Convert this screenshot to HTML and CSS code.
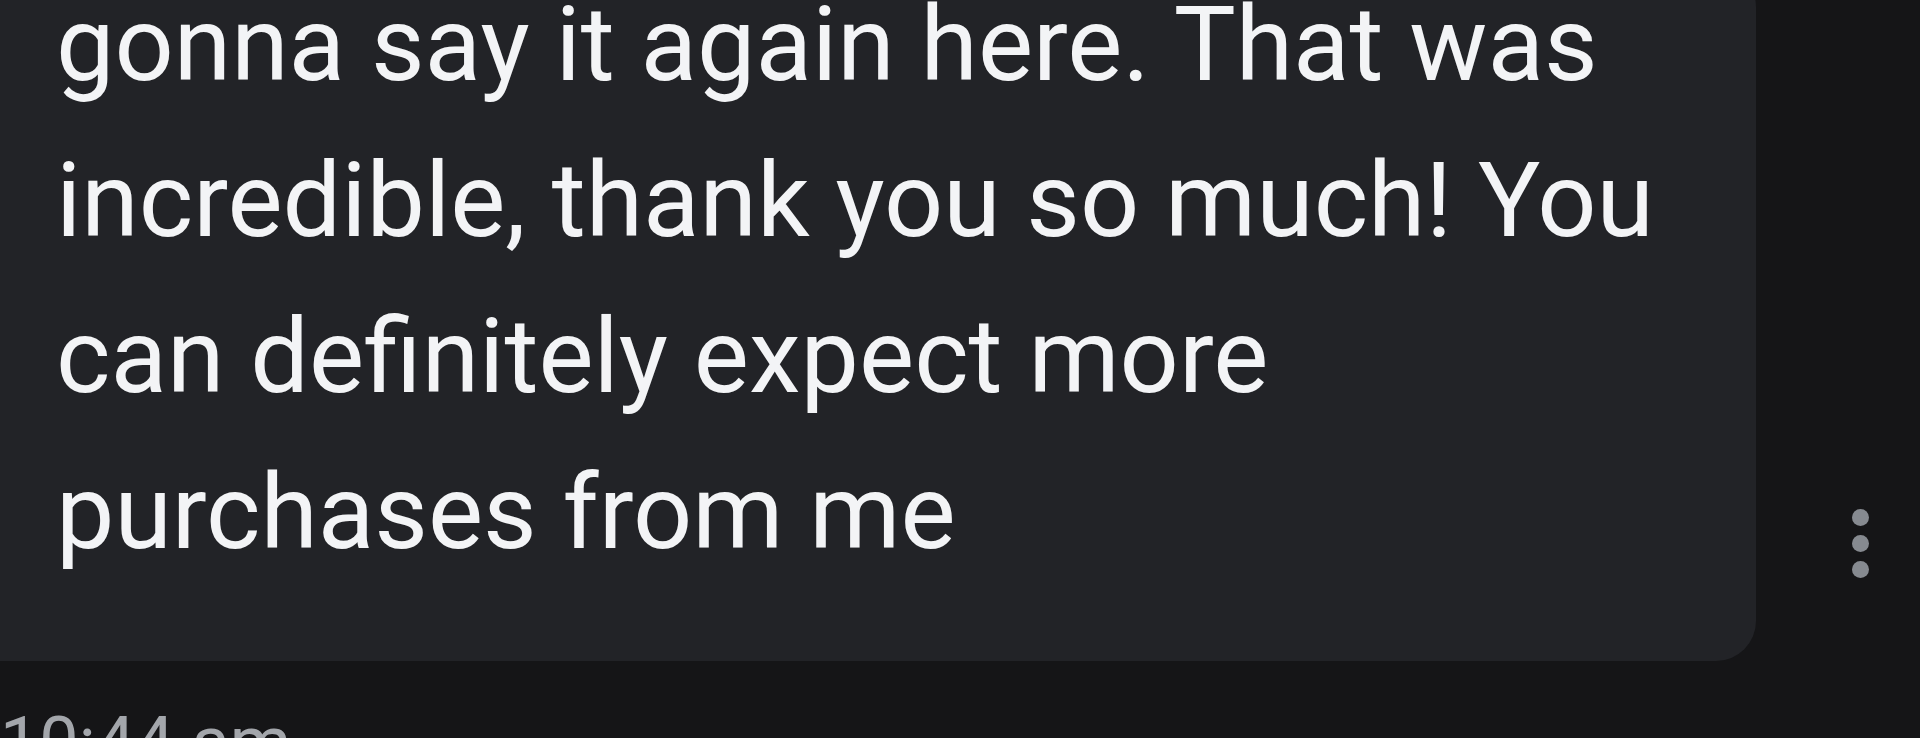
FILE: index.html
```html
<!DOCTYPE html>
<html lang="en">
<head>
<meta charset="utf-8">
<title>Message</title>
<link rel="stylesheet" href="styles.css">
</head>
<body>
<main class="thread">
  <div class="message-row">
    <div class="bubble">
      <p class="bubble-text">gonna say it again here. That was incredible, thank you so much! You can definitely expect more purchases from me</p>
    </div>
    <div class="more" aria-label="More options">
      <span class="dot"></span>
      <span class="dot"></span>
      <span class="dot"></span>
    </div>
  </div>
  <div class="timestamp">10:44 am</div>
</main>
</body>
</html>
```
FILE: styles.css
```css
html, body {
  margin: 0;
  padding: 0;
  height: 100%;
  overflow: hidden;
  background: #151517;
}

.thread {
  display: flex;
  flex-direction: column;
  font-family: Roboto, "Noto Sans", sans-serif;
}

.message-row {
  display: flex;
  align-items: flex-end;
  margin-top: -33px;
}

.bubble {
  flex: 0 0 1796px;
  margin-left: -40px;
  background: #222327;
  border-radius: 40px;
  box-sizing: border-box;
  padding: 0 50px 70px 96px;
}

.bubble-text {
  margin: 0;
  color: #f3f4f6;
  font-size: 104px;
  line-height: 156px;
}

.more {
  display: flex;
  flex-direction: column;
  gap: 9px;
  margin-left: 96px;
  margin-bottom: 83px;
}

.dot {
  width: 17px;
  height: 17px;
  border-radius: 50%;
  background: #868a90;
}

.timestamp {
  margin-top: 40px;
  color: #a3a6ab;
  font-size: 70px;
  line-height: normal;
}
```
